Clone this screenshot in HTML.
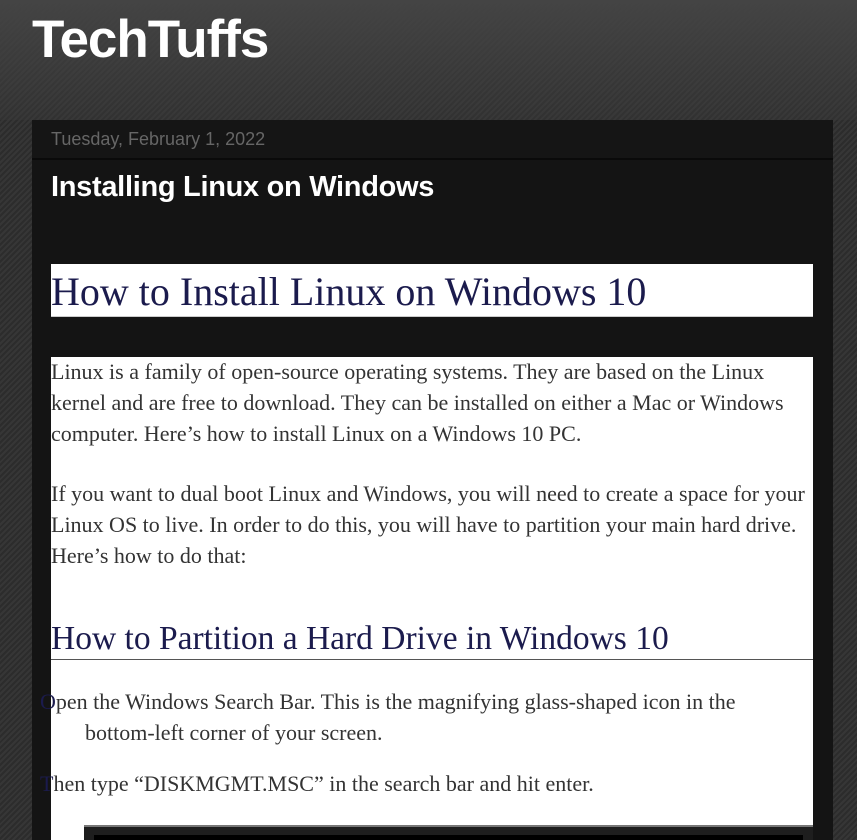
<!DOCTYPE html>
<html><head><meta charset="utf-8"><style>
html,body{margin:0;padding:0;width:857px;height:840px;overflow:hidden}
body{background:#2e2e2e repeating-linear-gradient(135deg,#2c2c2c 0 2px,#363636 2px 4px);font-family:"Liberation Sans",sans-serif;position:relative}
.top{position:absolute;left:0;top:0;width:857px;height:120px;background:linear-gradient(#444,rgba(60,60,60,0.3))}
h1.site{position:absolute;left:32px;top:9px;margin:0;font-size:53px;font-weight:bold;color:#fff;letter-spacing:-1px}
.panel{position:absolute;left:32px;top:120px;width:801px;height:720px;background:#141414}
.date{height:38px;border-bottom:2px solid #0a0a0a;color:#666;font-size:18px;line-height:38px;padding-left:19px;background:#151515}
.title{position:absolute;left:19px;top:51px;color:#fff;font-size:29px;font-weight:bold;letter-spacing:-0.3px}
.wb{position:absolute;left:19px;width:762px;background:#fff;font-family:"Liberation Serif",serif}
.h{top:144px;height:53px;border-bottom:1px solid #ccc;box-sizing:border-box;font-size:40px;color:#1b1b4d;line-height:55px}
.body{top:237px;height:500px;color:#333;font-size:22px;line-height:31px}
p{margin:0;white-space:nowrap}
.h2{position:absolute;left:0;top:262px;width:762px;font-size:33.5px;color:#1b1b4d;border-bottom:1px solid #555;line-height:40px;height:40px}
.li{position:absolute;left:-11px;width:760px;padding-left:45px;text-indent:-45px}
.img{position:absolute;left:33px;top:468px;width:729px;height:40px;background:#1e1e1e;border-top:2px solid #777}
.img div{margin:8px 10px;height:30px;background:#000}
</style></head><body>
<div class="top"></div>
<h1 class="site">TechTuffs</h1>
<div class="panel">
<div class="date">Tuesday, February 1, 2022</div>
<div class="title">Installing Linux on Windows</div>
<div class="wb h">How to Install Linux on Windows 10</div>
<div class="wb body">
<p style="position:absolute;top:-1px;left:0">Linux is a family of open-source operating systems. They are based on the Linux<br>kernel and are free to download. They can be installed on either a Mac or Windows<br>computer. Here’s how to install Linux on a Windows 10 PC.</p>
<p style="position:absolute;top:121px;left:0">If you want to dual boot Linux and Windows, you will need to create a space for your<br>Linux OS to live. In order to do this, you will have to partition your main hard drive.<br>Here’s how to do that:</p>
<div class="h2">How to Partition a Hard Drive in Windows 10</div>
<p class="li" style="top:329px"><span style="color:#1b1b4d">O</span>pen the Windows Search Bar. This is the magnifying glass-shaped icon in the<br>bottom-left corner of your screen.</p>
<p class="li" style="top:411px"><span style="color:#1b1b4d">T</span>hen type “DISKMGMT.MSC” in the search bar and hit enter.</p>
<div class="img"><div></div></div>
</div>
</div>
</body></html>
